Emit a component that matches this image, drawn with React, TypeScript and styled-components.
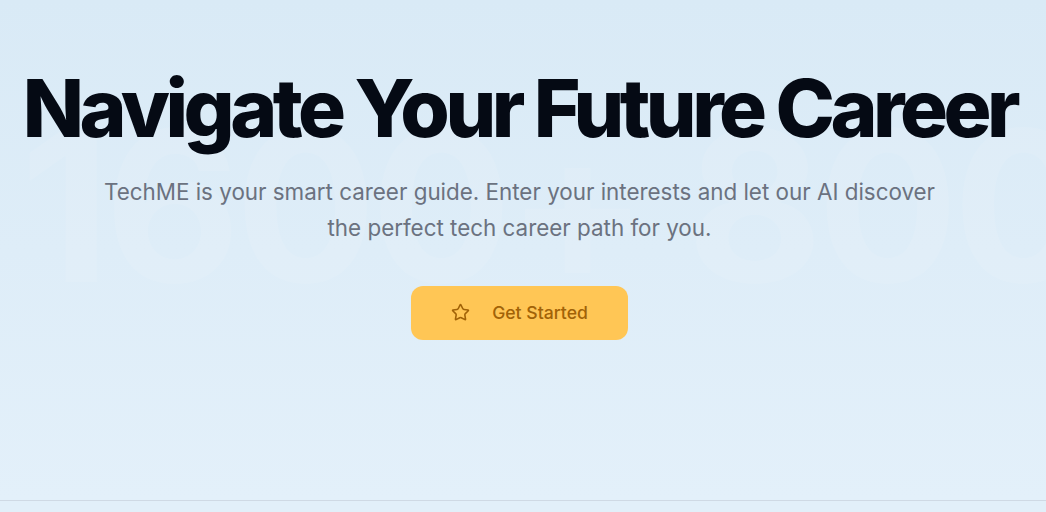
import React from "react";
import styled, { createGlobalStyle } from "styled-components";
import { Star } from "lucide-react";

const GlobalStyle = createGlobalStyle`
  html, body {
    margin: 0;
    padding: 0;
    background: #e2eff9;
  }
  * {
    box-sizing: border-box;
  }
`;

const Hero = styled.section`
  position: relative;
  overflow: hidden;
  height: 501px;
  background: linear-gradient(180deg, #d9eaf6 0%, #e3f0fa 100%);
  border-bottom: 1px solid #cfd9e4;
  display: flex;
  flex-direction: column;
  align-items: center;
  padding: 64px 7px 0 0;
  font-family: Inter, "Noto Sans", sans-serif;
`;

// big faded numbers sitting behind the hero copy
const Watermark = styled.div`
  position: absolute;
  left: 20px;
  top: 101px;
  font-size: 210px;
  line-height: 1;
  font-weight: 700;
  letter-spacing: -6px;
  white-space: nowrap;
  color: rgba(255, 255, 255, 0.09);
  pointer-events: none;
  user-select: none;
`;

const Content = styled.div`
  position: relative;
  display: flex;
  flex-direction: column;
  align-items: center;
  text-align: center;
`;

const Title = styled.h1`
  margin: 0;
  font-size: 80px;
  line-height: 1.1;
  font-weight: 800;
  letter-spacing: -4.5px;
  color: #050a14;
  white-space: nowrap;
`;

const Subtitle = styled.p`
  margin: 22px 0 0;
  max-width: 860px;
  font-size: 22.4px;
  line-height: 35.75px;
  color: #6b7280;
`;

const CtaButton = styled.button`
  margin-top: 40px;
  display: flex;
  align-items: center;
  gap: 22px;
  height: 54px;
  padding: 0 40px;
  border: none;
  border-radius: 12px;
  background: #ffc655;
  color: #a16207;
  font-family: inherit;
  font-size: 17.6px;
  font-weight: 500;
  cursor: pointer;
`;

export default function App() {
  return (
    <>
      <GlobalStyle />
      <Hero>
        <Watermark aria-hidden="true">1600+ 8000+</Watermark>
        <Content>
          <Title>Navigate Your Future Career</Title>
          <Subtitle>
            TechME is your smart career guide. Enter your interests and let our AI discover
            the perfect tech career path for you.
          </Subtitle>
          <CtaButton>
            <Star size={19} strokeWidth={2} />
            Get Started
          </CtaButton>
        </Content>
      </Hero>
    </>
  );
}
